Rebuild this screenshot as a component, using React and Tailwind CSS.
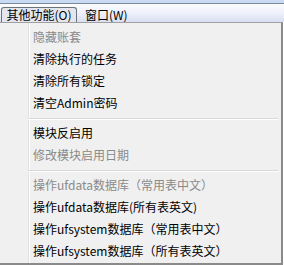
import React from "react";

const Row = ({ children, disabled }) => (
  <div
    className={`h-[22px] flex items-center pl-[33px] whitespace-nowrap text-[12px] leading-none ${
      disabled ? "text-[#8a8a8a]" : "text-black"
    }`}
  >
    {children}
  </div>
);

const Sep = () => (
  <div className="h-[8px] flex flex-col pt-[4px] pl-[28px] pr-[3px]">
    <div className="h-px bg-[#d8d8d8]" />
    <div className="h-px bg-white" />
  </div>
);

export default function App() {
  return (
    <div
      className="w-[284px] h-[265px] bg-white relative overflow-hidden"
      style={{ fontFamily: '"Noto Sans CJK SC", "Noto Sans", sans-serif' }}
    >
      {/* menu bar */}
      <div className="h-[22px] flex flex-col">
        <div className="h-[3px] bg-[#c9dbf3]" />
        <div className="h-px bg-[#7d8a9c]" />
        <div className="flex-1 bg-gradient-to-b from-[#fbfcfe] via-[#eef1fa] to-[#d9dff3] flex items-end">
          <div className="ml-[1px] w-[76px] h-[15px] border border-b-0 border-[#6f7378] rounded-t-[3px] bg-[#e4e6ef] flex items-center justify-center text-[12px] leading-none text-black">
            其他功能(O)
          </div>
          <div className="ml-[8px] h-[15px] flex items-center text-[12px] leading-none text-black">
            窗口(W)
          </div>
        </div>
      </div>
      {/* dropdown */}
      <div className="relative w-[283px] h-[243px] bg-[#f0f0f0] border-t border-t-[#a0a0a0] border-r-2 border-b-2 border-r-[#8a8a8a] border-b-[#8a8a8a] pt-[3px]">
        <div className="absolute left-[28px] top-0 bottom-0 w-px bg-[#e0e0e0]" />
        <div className="absolute left-[29px] top-0 bottom-0 w-px bg-white" />
        <div className="relative">
          <Row disabled>隐藏账套</Row>
          <Row>清除执行的任务</Row>
          <Row>清除所有锁定</Row>
          <Row>清空Admin密码</Row>
          <Sep />
          <Row>模块反启用</Row>
          <Row disabled>修改模块启用日期</Row>
          <Sep />
          <Row disabled>操作ufdata数据库（常用表中文）</Row>
          <Row>操作ufdata数据库(所有表英文)</Row>
          <Row>操作ufsystem数据库（常用表中文）</Row>
          <Row>操作ufsystem数据库（所有表英文）</Row>
        </div>
      </div>
    </div>
  );
}
